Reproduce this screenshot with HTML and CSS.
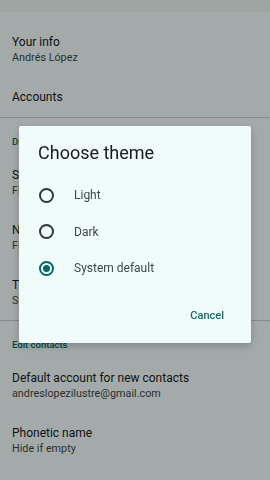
FILE: index.html
```html
<!DOCTYPE html>
<html lang="en">
<head>
    <meta charset="UTF-8">
    <meta name="viewport" content="width=device-width, initial-scale=1.0">
    <title>Settings</title>
    <link rel="stylesheet" href="styles.css">
</head>
<body>

    <div class="topbar"></div>

    <div class="settings">
        <div class="item">
            <p class="item__title">Your info</p>
            <p class="item__sub">Andrés López</p>
        </div>
        <div class="item item--single">
            <p class="item__title">Accounts</p>
        </div>

        <div class="divider"></div>
        <p class="header">Display options</p>

        <div class="item">
            <p class="item__title">Sort by</p>
            <p class="item__sub">First name</p>
        </div>
        <div class="item">
            <p class="item__title">Name format</p>
            <p class="item__sub">First name first</p>
        </div>
        <div class="item">
            <p class="item__title">Theme</p>
            <p class="item__sub">System default</p>
        </div>

        <div class="divider"></div>
        <p class="header">Edit contacts</p>

        <div class="item">
            <p class="item__title">Default account for new contacts</p>
            <p class="item__sub">andreslopezilustre@gmail.com</p>
        </div>
        <div class="item">
            <p class="item__title">Phonetic name</p>
            <p class="item__sub">Hide if empty</p>
        </div>
    </div>

    <div class="scrim"></div>

    <div class="dialog">
        <p class="dialog__title">Choose theme</p>
        <div class="options">
            <div class="option">
                <span class="radio"></span>
                <span class="option__label">Light</span>
            </div>
            <div class="option">
                <span class="radio"></span>
                <span class="option__label">Dark</span>
            </div>
            <div class="option">
                <span class="radio radio--checked"></span>
                <span class="option__label">System default</span>
            </div>
        </div>
        <div class="dialog__actions">
            <button class="button" type="button">Cancel</button>
        </div>
    </div>

</body>
</html>
```

FILE: styles.css
```css
* {
    box-sizing: border-box;
}

body {
    margin: 0;
    width: 270px;
    height: 480px;
    overflow: hidden;
    background: #f0fbf9;
    font-family: Roboto, "Noto Sans", sans-serif;
}

p {
    margin: 0;
}

.topbar {
    height: 12px;
    background: #e9f3f1;
}

.settings {
    padding-top: 10px;
}

.item {
    padding: 12px 12px;
}

.item--single {
    height: 40px;
}

.item__title {
    font-size: 12px;
    line-height: 16px;
    color: #191c1c;
}

.item__sub {
    font-size: 10.8px;
    line-height: 15px;
    color: #3f4947;
}

.divider {
    height: 1px;
    background: #c4ccca;
}

.header {
    padding: 17px 12px 6px;
    font-size: 9.5px;
    line-height: 14px;
    font-weight: 500;
    color: #006a60;
}

.scrim {
    position: fixed;
    inset: 0;
    background: rgba(0, 0, 0, 0.32);
}

.dialog {
    position: fixed;
    left: 19px;
    top: 126px;
    width: 232px;
    height: 217px;
    background: #effcfa;
    border-radius: 2px;
    box-shadow: 0 3px 8px rgba(0, 0, 0, 0.22);
    display: flex;
    flex-direction: column;
}

.dialog__title {
    padding: 15px 19px 0;
    font-size: 18px;
    line-height: 24px;
    color: #191c1c;
}

.options {
    padding-top: 12px;
}

.option {
    height: 36.5px;
    display: flex;
    align-items: center;
    padding-left: 20px;
    gap: 20px;
}

.radio {
    width: 15px;
    height: 15px;
    border: 2px solid #2f3837;
    border-radius: 50%;
    display: flex;
    align-items: center;
    justify-content: center;
}

.radio--checked {
    border-color: #006a60;
}

.radio--checked::after {
    content: "";
    width: 7px;
    height: 7px;
    border-radius: 50%;
    background: #006a60;
}

.option__label {
    font-size: 12px;
    color: #3f4947;
}

.dialog__actions {
    margin-top: auto;
    display: flex;
    justify-content: flex-end;
    padding: 0 19px 19px 0;
}

.button {
    border: none;
    background: none;
    cursor: pointer;
    padding: 0 8px;
    height: 18px;
    font-family: Roboto, sans-serif;
    font-size: 11px;
    font-weight: 500;
    color: #1a6a5f;
}
```
